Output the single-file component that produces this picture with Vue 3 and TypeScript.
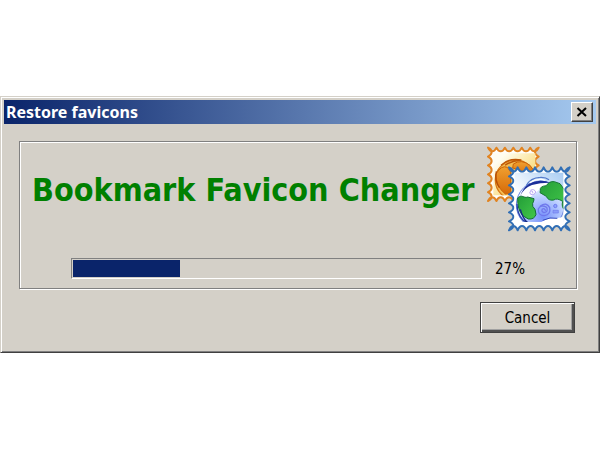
<script setup lang="ts">
import { ref } from 'vue'

const percent = ref(27)
const open = ref(true)

// Outline of a stamp whose four sides are cut into rounded teeth.
function stampOutline(x: number, y: number, w: number, h: number, nx: number, ny: number, depth: number): string {
  const sx = w / nx
  const sy = h / ny
  let d = `M${x} ${y}`
  for (let i = 0; i < nx; i++) d += `q${sx * 0.2} ${depth} ${sx / 2} ${depth}t${sx / 2} ${-depth}`
  for (let i = 0; i < ny; i++) d += `q${-depth} ${sy * 0.2} ${-depth} ${sy / 2}t${depth} ${sy / 2}`
  for (let i = 0; i < nx; i++) d += `q${-sx * 0.2} ${-depth} ${-sx / 2} ${-depth}t${-sx / 2} ${depth}`
  for (let i = 0; i < ny; i++) d += `q${depth} ${-sy * 0.2} ${depth} ${-sy / 2}t${-depth} ${-sy / 2}`
  return d + 'Z'
}

const backStamp = stampOutline(24, 23, 152, 160, 6, 6, 11)
const frontStamp = stampOutline(87, 82, 182, 189, 7, 7, 13)
</script>

<template>
  <main class="desktop">
    <section v-if="open" class="dialog" role="dialog" aria-labelledby="dialog-title">
      <header class="titlebar">
        <h1 id="dialog-title">Restore favicons</h1>
        <button class="close" type="button" aria-label="Close" @click="open = false">
          <svg viewBox="0 0 12 10" width="12" height="10" aria-hidden="true">
            <path d="M1.5 1 10 9M10 1 1.5 9" fill="none" stroke="#000" stroke-width="2" />
          </svg>
        </button>
      </header>
      <div class="body">
        <div class="group">
          <div class="banner">
            <h2>Bookmark Favicon Changer</h2>
            <svg class="stamps" viewBox="18 15 258 264" aria-hidden="true">
              <defs>
                <linearGradient id="gold" x1="0" y1="0" x2="1" y2="1">
                  <stop offset="0.15" stop-color="#fffdf0" />
                  <stop offset="1" stop-color="#f5c83c" />
                </linearGradient>
                <linearGradient id="amber" x1="0" y1="0" x2="0" y2="1">
                  <stop offset="0" stop-color="#f0a030" />
                  <stop offset="1" stop-color="#d66a08" />
                </linearGradient>
                <linearGradient id="sky" x1="0" y1="1" x2="1" y2="0">
                  <stop offset="0.3" stop-color="#fff" />
                  <stop offset="1" stop-color="#a9cdf3" />
                </linearGradient>
                <radialGradient id="sea" cx="0.55" cy="0.75" r="0.65">
                  <stop offset="0" stop-color="#7690fa" />
                  <stop offset="0.6" stop-color="#b6cbff" />
                  <stop offset="1" stop-color="#eef4ff" />
                </radialGradient>
                <linearGradient id="land" x1="0" y1="0" x2="1" y2="1">
                  <stop offset="0" stop-color="#239d38" />
                  <stop offset="1" stop-color="#43c849" />
                </linearGradient>
                <clipPath id="back-window"><path d="M40 40H166V166H40Z" /></clipPath>
                <clipPath id="front-window"><path d="M104 98H250V246H104Z" /></clipPath>
              </defs>
              <path :d="backStamp" fill="#fffefa" stroke="#e18422" stroke-width="6" stroke-linejoin="round" />
              <path d="M40 40H166V166H40Z" fill="url(#gold)" />
              <g clip-path="url(#back-window)">
                <circle cx="106" cy="120" r="60" fill="#f3bb52" stroke="#d87916" stroke-width="4" />
                <path d="M48 102Q64 74 82 82L92 96V160L76 162Q46 138 48 102Z" fill="url(#amber)" stroke="#c96308" stroke-width="3" />
                <path d="M100 72Q124 56 150 76L166 98L146 109L125 92L98 84Z" fill="url(#amber)" stroke="#c96308" stroke-width="3" />
                <path d="M63 76Q88 52 124 60Q94 62 75 76" fill="none" stroke="#bd5708" stroke-width="4" />
                <path d="M49 94Q43 122 58 143" fill="none" stroke="#b64e05" stroke-width="4" />
              </g>
              <path :d="frontStamp" fill="#fff" stroke="#326fb5" stroke-width="6" stroke-linejoin="round" />
              <path d="M104 98H250V246H104Z" fill="url(#sky)" />
              <g clip-path="url(#front-window)">
                <circle cx="181" cy="195" r="72" fill="url(#sea)" stroke="#6c83df" stroke-width="3" />
                <path d="M139 140Q164 120 204 126L208 139L190 150L180 147L151 171L135 173L121 163Z" fill="#fff" />
                <path d="M113 174C126 161 131 176 143 171L162 176Q162 184 158 190Q155 199 165 208L168 223Q163 239 145 237L128 227Q112 209 113 174Z" fill="url(#land)" stroke="#126d32" stroke-width="3" />
                <path d="M181 151Q178 139 199 137Q207 123 223 125L240 131L255 152V211Q243 201 248 184Q231 173 221 180Q205 183 199 169L180 158Z" fill="url(#land)" stroke="#157634" stroke-width="3" />
                <path d="M121 167Q135 124 181 122Q199 121 208 128Q180 128 156 135Q132 144 121 167Z" fill="#1b2e99" />
                <path d="M139 137Q151 113 181 112Q197 111 207 119" fill="none" stroke="#547acb" stroke-width="4" />
                <path d="M149 128Q174 113 196 121" fill="none" stroke="#fff" stroke-width="4" />
                <path d="M111 192Q112 222 128 239Q147 256 184 250" fill="none" stroke="#2440a5" stroke-width="4" />
                <path d="M121 208Q128 235 143 248" fill="none" stroke="#162986" stroke-width="4" />
                <path d="M181 198Q200 185 209 203Q213 224 193 227Q173 226 175 207Q182 192 200 202Q206 216 192 218Q183 215 187 207Q194 204 196 211" fill="none" stroke="#6f78ec" stroke-width="4" stroke-linecap="round" />
                <path d="M151 151Q163 145 167 156Q164 166 152 163Q146 154 155 153Q162 156 157 160" fill="none" stroke="#b8a5f3" stroke-width="3" />
                <circle cx="226" cy="198" r="5" fill="#8da3ff" stroke="#6f7cec" stroke-width="3" />
                <path d="M219 211H235V219H219Z" fill="#899cfa" stroke="#6f7cec" stroke-width="2" />
                <path d="M184 246Q204 232 228 235L250 231V246Z" fill="#fff" />
                <path d="M188 241Q210 230 232 235" fill="none" stroke="#3349bd" stroke-width="3" />
              </g>
            </svg>
          </div>
          <div class="progress-row">
            <div class="track" role="progressbar" aria-label="Restore favicons" :aria-valuenow="percent" aria-valuemin="0" aria-valuemax="100">
              <div class="fill" :style="{ width: percent * 0.97 + '%' }"></div>
            </div>
            <span class="percent">{{ percent }}%</span>
          </div>
        </div>
        <footer>
          <button class="cancel" type="button" @click="open = false">Cancel</button>
        </footer>
      </div>
    </section>
  </main>
</template>

<style>
body {
  background: #fff;
}
</style>

<style scoped>
* {
  box-sizing: border-box;
}
.desktop {
  padding-top: 96px;
  font-family: "DejaVu Sans Condensed", "Noto Sans", sans-serif;
  font-size: 15px;
  line-height: 20px;
  color: #000;
}
.dialog {
  padding: 3px 3px 18px;
  background: #d4d0c8;
  border: 1px solid;
  border-color: #d4d0c8 #404040 #404040 #d4d0c8;
  box-shadow: inset 1px 1px #fff, inset -1px -1px #808080;
}
.titlebar {
  display: flex;
  align-items: center;
  justify-content: space-between;
  height: 24px;
  padding: 0 3px 0 2px;
  background: linear-gradient(90deg, #0a246a, #a6caf0);
}
h1,
h2 {
  margin: 0;
  font-weight: bold;
}
h1 {
  color: #fff;
  font-family: "Noto Sans", sans-serif;
  font-size: 16px;
  line-height: 24px;
}
button {
  padding: 0;
  background: #d4d0c8;
  color: #000;
  font: inherit;
}
.close {
  display: flex;
  align-items: center;
  justify-content: center;
  width: 22px;
  height: 20px;
  border: 1px solid;
  border-color: #fff #404040 #404040 #fff;
  box-shadow: inset -1px -1px #808080;
}
.body {
  padding: 17px 19px 0 15px;
}
.group {
  padding: 3px 4px 9px 12px;
  border: 1px solid #808080;
  box-shadow: inset 1px 1px #fff, 1px 1px #fff;
}
.banner {
  display: flex;
  align-items: center;
  justify-content: space-between;
}
h2 {
  padding-top: 2px;
  color: #008000;
  font-size: 32px;
  line-height: 40px;
  white-space: nowrap;
}
.stamps {
  flex: none;
  width: 86px;
  height: 88px;
}
.progress-row {
  display: flex;
  align-items: center;
  gap: 13px;
  padding: 25px 0 0 39px;
}
.track {
  flex: 1;
  height: 21px;
  padding: 1px;
  border: 1px solid;
  border-color: #808080 #fff #fff #808080;
}
.fill {
  height: 100%;
  background: #0a246a;
}
.percent {
  width: 77px;
}
footer {
  display: flex;
  justify-content: flex-end;
  padding: 13px 2px 1px 0;
}
.cancel {
  width: 95px;
  height: 31px;
  border: 1px solid #404040;
  box-shadow: inset 1px 1px #fff, inset -2px -2px #505050, inset -3px -3px #a0a0a0;
}
</style>
